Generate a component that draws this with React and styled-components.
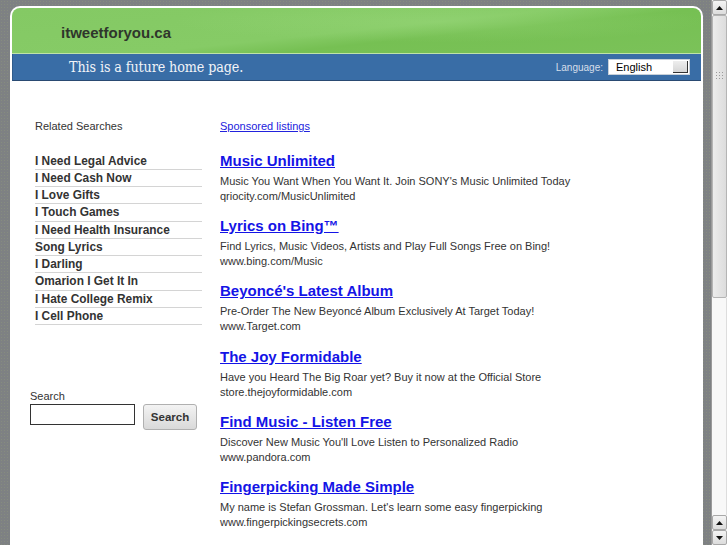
import React from 'react'
import styled, { createGlobalStyle } from 'styled-components'

const GlobalStyle = createGlobalStyle`
  html, body {
    margin: 0;
    padding: 0;
    height: 100%;
    overflow: hidden;
  }
  body {
    font-family: "Liberation Sans", Arial, sans-serif;
    color: #333;
  }
  #root {
    height: 100%;
  }
`

const related = [
  'I Need Legal Advice',
  'I Need Cash Now',
  'I Love Gifts',
  'I Touch Games',
  'I Need Health Insurance',
  'Song Lyrics',
  'I Darling',
  'Omarion I Get It In',
  'I Hate College Remix',
  'I Cell Phone',
]

const listings = [
  {
    title: 'Music Unlimited',
    text: "Music You Want When You Want It. Join SONY's Music Unlimited Today",
    url: 'qriocity.com/MusicUnlimited',
  },
  {
    title: 'Lyrics on Bing™',
    text: 'Find Lyrics, Music Videos, Artists and Play Full Songs Free on Bing!',
    url: 'www.bing.com/Music',
  },
  {
    title: "Beyoncé's Latest Album",
    text: 'Pre-Order The New Beyoncé Album Exclusively At Target Today!',
    url: 'www.Target.com',
  },
  {
    title: 'The Joy Formidable',
    text: 'Have you Heard The Big Roar yet? Buy it now at the Official Store',
    url: 'store.thejoyformidable.com',
  },
  {
    title: 'Find Music - Listen Free',
    text: "Discover New Music You'll Love Listen to Personalized Radio",
    url: 'www.pandora.com',
  },
  {
    title: 'Fingerpicking Made Simple',
    text: "My name is Stefan Grossman. Let's learn some easy fingerpicking",
    url: 'www.fingerpickingsecrets.com',
  },
]

function Arrow({ down }) {
  return (
    <svg width="7" height="4" viewBox="0 0 7 4">
      <path d={down ? 'M0 0h7L3.5 4z' : 'M0 4h7L3.5 0z'} fill="#111" />
    </svg>
  )
}

export default function App() {
  return (
    <>
      <GlobalStyle />
      <Frame>
        <Viewport>
          <Page>
            <Header>
              <SiteName>itweetforyou.ca</SiteName>
            </Header>
            <Bar>
              <Tagline>This is a future home page.</Tagline>
              <Language>
                <span>Language:</span>
                <Select>
                  <span>English</span>
                  <SelectButton />
                </Select>
              </Language>
            </Bar>
            <Content>
              <Sidebar>
                <Label>Related Searches</Label>
                <RelatedList>
                  {related.map((r) => (
                    <RelatedItem key={r}>{r}</RelatedItem>
                  ))}
                </RelatedList>
                <SearchBox>
                  <Label>Search</Label>
                  <SearchRow>
                    <SearchInput />
                    <SearchButton>Search</SearchButton>
                  </SearchRow>
                </SearchBox>
              </Sidebar>
              <Listings>
                <Sponsored>Sponsored listings</Sponsored>
                {listings.map((l) => (
                  <Listing key={l.title}>
                    <ListingTitle>{l.title}</ListingTitle>
                    <ListingText>{l.text}</ListingText>
                    <ListingText>{l.url}</ListingText>
                  </Listing>
                ))}
              </Listings>
            </Content>
          </Page>
        </Viewport>
        <Scrollbar>
          <ScrollButton>
            <Arrow />
          </ScrollButton>
          <Thumb>
            <Grip />
          </Thumb>
          <Track />
          <ScrollButton>
            <Arrow />
          </ScrollButton>
          <ScrollButton>
            <Arrow down />
          </ScrollButton>
        </Scrollbar>
      </Frame>
    </>
  )
}

const Frame = styled.div`
  display: flex;
  height: 100vh;
`

const Viewport = styled.div`
  flex: 1;
  background-color: #7e8183;
  background-image: radial-gradient(rgba(150, 160, 120, 0.35) 0.6px, transparent 0.8px);
  background-size: 3px 3px;
  padding: 6px 8px 0 10px;
  overflow: hidden;
  display: flex;
  flex-direction: column;
`

const Page = styled.div`
  flex: 1;
  background: #fff;
  border-radius: 10px 10px 0 0;
  padding: 2px 2px 0;
`

const Header = styled.div`
  height: 46px;
  border-radius: 8px 8px 0 0;
  border-bottom: 1px solid #bfe3a8;
  background:
    radial-gradient(ellipse 380px 30px at 62% 30%, rgba(160, 220, 130, 0.35), transparent 70%),
    linear-gradient(174deg, #84c964 0%, #86cb66 50%, #76c053 62%, #7bc259 100%);
  padding: 16px 0 0 49px;
  box-sizing: border-box;
`

const SiteName = styled.div`
  font-weight: bold;
  font-size: 15px;
  line-height: 18px;
  color: #2f362c;
`

const Bar = styled.div`
  height: 26px;
  background: #396da6;
  border-bottom: 1px solid #2a4a72;
  border-left: 1px solid #2f5c8c;
  display: flex;
  align-items: center;
  justify-content: space-between;
  padding: 0 11px 0 56px;
`

const Tagline = styled.div`
  font-family: "DejaVu Serif", serif;
  font-stretch: condensed;
  font-size: 14.2px;
  letter-spacing: -0.1px;
  color: #f2f4f8;
`

const Language = styled.div`
  display: flex;
  align-items: center;
  gap: 5px;
  font-size: 10px;
  color: #d6dfea;
`

const Select = styled.div`
  width: 82px;
  height: 16px;
  box-sizing: border-box;
  background: #fff;
  border: 1px solid #c8d0d8;
  display: flex;
  align-items: center;
  justify-content: space-between;
  padding: 0 1px 0 7px;
  font-size: 11px;
  color: #000;
`

const SelectButton = styled.div`
  width: 15px;
  height: 12px;
  box-sizing: border-box;
  background: linear-gradient(#eee, #d6d6d6);
  border-right: 1px solid #333;
  border-bottom: 1px solid #333;
`

const Content = styled.div`
  display: grid;
  grid-template-columns: 167px 1fr;
  column-gap: 18px;
  padding: 39px 0 0 23px;
`

const Sidebar = styled.div`
  display: flex;
  flex-direction: column;
`

const Label = styled.div`
  font-size: 11px;
  line-height: 13px;
  color: #333;
`

const RelatedList = styled.div`
  margin-top: 19.5px;
`

const RelatedItem = styled.div`
  font-weight: bold;
  font-size: 11.9px;
  line-height: 16.25px;
  color: #333;
  border-bottom: 1px solid #d4d4d4;
`

const SearchBox = styled.div`
  margin: 64.5px 0 0 -5px;
`

const SearchRow = styled.div`
  display: flex;
  align-items: flex-start;
  gap: 8px;
  margin-top: 1px;
`

const SearchInput = styled.input`
  width: 105px;
  height: 21px;
  box-sizing: border-box;
  border: 1px solid #333;
  padding: 0;
`

const SearchButton = styled.button`
  width: 54px;
  height: 26px;
  border: 1px solid #b0b0b0;
  border-radius: 3px;
  background: linear-gradient(#f3f3f3, #d9d9d9);
  font-family: "Liberation Sans", Arial, sans-serif;
  font-weight: bold;
  font-size: 11.5px;
  color: #333;
  padding: 0;
`

const Listings = styled.div`
  display: flex;
  flex-direction: column;
`

const Sponsored = styled.a`
  font-size: 11px;
  line-height: 13px;
  color: #2222dd;
  text-decoration: underline;
  margin-bottom: 17.5px;
`

const Listing = styled.div`
  margin-bottom: 12.4px;
`

const ListingTitle = styled.a`
  display: block;
  font-weight: bold;
  font-size: 15px;
  line-height: 20px;
  color: #1414e6;
  text-decoration: underline;
  margin-bottom: 3px;
`

const ListingText = styled.div`
  font-size: 11px;
  line-height: 15px;
  color: #333;
`

const Scrollbar = styled.div`
  width: 15px;
  display: flex;
  flex-direction: column;
  background: #f6f6f6;
  border-left: 1px solid #9a9a9a;
`

const ScrollButton = styled.div`
  height: 15px;
  box-sizing: border-box;
  background: linear-gradient(#f4f4f4, #dcdcdc);
  border: 1px solid #a8a8a8;
  border-radius: 2px;
  display: flex;
  align-items: center;
  justify-content: center;
`

const Thumb = styled.div`
  height: 283px;
  box-sizing: border-box;
  background: linear-gradient(90deg, #ececec, #dcdcdc);
  border: 1px solid #b4b4b4;
  border-radius: 2px;
  display: flex;
  justify-content: center;
  padding-top: 55px;
`

const Grip = styled.div`
  width: 9px;
  height: 9px;
  background-image: radial-gradient(#9a9a9a 0.7px, transparent 0.9px);
  background-size: 3px 3px;
`

const Track = styled.div`
  flex: 1;
  background: #f8f8f8;
  border-right: 1px solid #ddd;
`
